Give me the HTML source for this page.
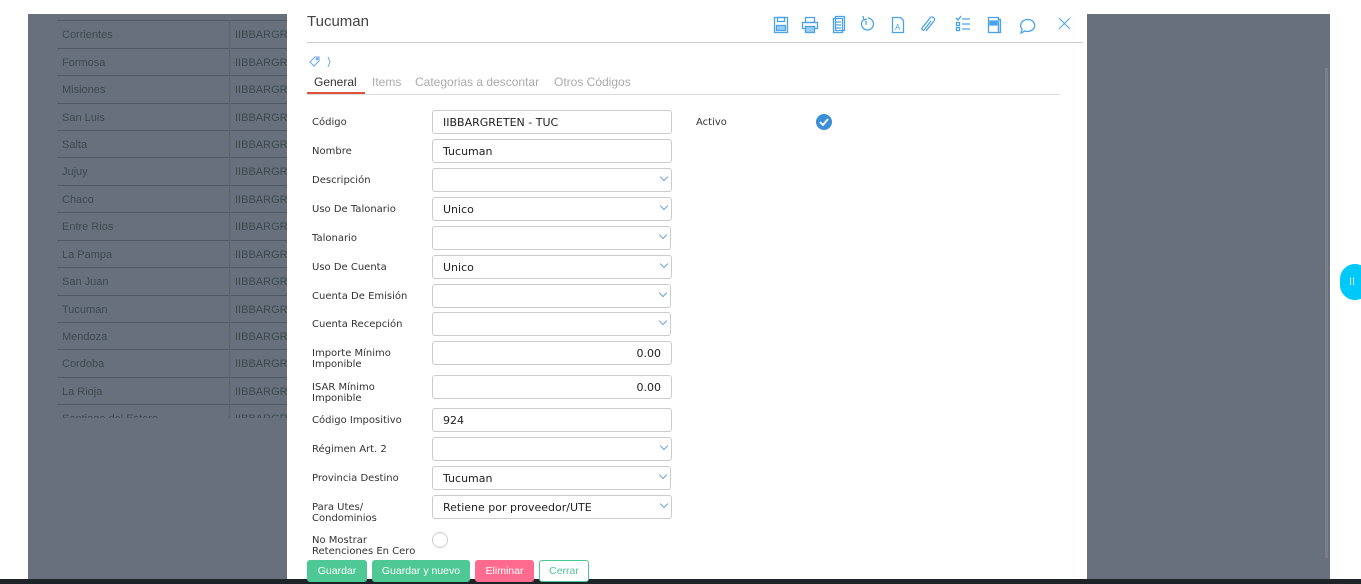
<!DOCTYPE html>
<html><head><meta charset="utf-8"><style>
*{box-sizing:border-box;margin:0;padding:0}
body{width:1361px;height:584px;position:relative;overflow:hidden;background:#fff;font-family:"Liberation Sans",sans-serif}
#ov{position:absolute;left:28px;top:14px;width:1302px;height:565px;background:#68707e}
#bot{position:absolute;left:0;top:579px;width:1361px;height:5px;background:#1e2328}
.tr{position:absolute;left:57px;width:230px;height:27px;border-top:1px solid #4f5866;font-size:11px;color:#3c4a4a}
.tr span{position:absolute;top:8px}
.scroll{position:absolute;left:1325px;top:68px;width:3px;height:490px;background:#7a7f88}
#modal{position:absolute;left:287px;top:0;width:800px;height:579px;background:#fff}
.lab{position:absolute;left:312px;font-family:"DejaVu Sans",sans-serif;font-size:10px;color:#333;line-height:11px;margin-top:1px}
.box{position:absolute;left:432px;width:240px;height:24px;border:1px solid #ccc;border-radius:3px;font-family:"DejaVu Sans",sans-serif;font-size:11px;color:#222;padding:6px 10px 0;line-height:12px}
.chev{position:absolute;right:4px;top:5px;width:6px;height:6px;border-right:1px solid #6aa6d8;border-bottom:1px solid #6aa6d8;transform:rotate(45deg)}
.btn{position:absolute;top:560px;height:22px;border-radius:3px;font-size:10.5px;color:#fff;text-align:center;line-height:22px}
</style></head><body>
<div id="ov"></div>
<div class="tr" style="top:20px"><span style="left:5px">Corrientes</span><span style="left:178px">IIBBARGRE</span></div>
<div class="tr" style="top:48px"><span style="left:5px">Formosa</span><span style="left:178px">IIBBARGRE</span></div>
<div class="tr" style="top:75px"><span style="left:5px">Misiones</span><span style="left:178px">IIBBARGRE</span></div>
<div class="tr" style="top:103px"><span style="left:5px">San Luis</span><span style="left:178px">IIBBARGRE</span></div>
<div class="tr" style="top:130px"><span style="left:5px">Salta</span><span style="left:178px">IIBBARGRE</span></div>
<div class="tr" style="top:157px"><span style="left:5px">Jujuy</span><span style="left:178px">IIBBARGRE</span></div>
<div class="tr" style="top:185px"><span style="left:5px">Chaco</span><span style="left:178px">IIBBARGRE</span></div>
<div class="tr" style="top:212px"><span style="left:5px">Entre Rios</span><span style="left:178px">IIBBARGRE</span></div>
<div class="tr" style="top:240px"><span style="left:5px">La Pampa</span><span style="left:178px">IIBBARGRE</span></div>
<div class="tr" style="top:267px"><span style="left:5px">San Juan</span><span style="left:178px">IIBBARGRE</span></div>
<div class="tr" style="top:295px"><span style="left:5px">Tucuman</span><span style="left:178px">IIBBARGRE</span></div>
<div class="tr" style="top:322px"><span style="left:5px">Mendoza</span><span style="left:178px">IIBBARGRE</span></div>
<div class="tr" style="top:349px"><span style="left:5px">Cordoba</span><span style="left:178px">IIBBARGRE</span></div>
<div class="tr" style="top:377px"><span style="left:5px">La Rioja</span><span style="left:178px">IIBBARGRE</span></div>
<div class="tr" style="top:404px;height:14px;overflow:hidden"><span style="left:5px">Santiago del Estero</span><span style="left:178px">IIBBARGRE</span></div>
<div style="position:absolute;left:229px;top:20px;width:1px;height:398px;background:#5c6472"></div>
<div class="scroll"></div>
<div id="bot"></div>
<div style="position:absolute;left:1340px;top:264px;width:30px;height:36px;border-radius:18px;background:#00c8f8;color:#cfefff;font-size:11px;line-height:36px;padding-left:9px">II</div>

<div id="modal"></div>
<div style="position:absolute;left:307px;top:13px;font-size:15px;color:#444">Tucuman</div>
<div style="position:absolute;left:307px;top:42px;width:776px;height:1px;background:#ccc"></div>
<svg style="position:absolute;left:760px;top:8px" width="320" height="32" fill="none" stroke="#4aa3ea" stroke-width="1.3">
<rect x="14.5" y="9.5" width="13" height="15"/><rect x="17.5" y="9.5" width="7" height="4"/><rect x="16.5" y="17.5" width="9" height="5" fill="#9ccdf4"/>
<rect x="45.5" y="9.5" width="9" height="5"/><rect x="42.5" y="14.5" width="15" height="6"/><rect x="45.5" y="18.5" width="9" height="6" fill="#9ccdf4"/>
<rect x="73.5" y="10.5" width="9" height="14"/><rect x="75.5" y="8.5" width="9" height="14"/><path d="M75 14h6M75 17h6M75 20h6"/>
<path d="M103 12a6 6 0 1 0 5 -2M103 8l1 4 3 -1M106 13v4"/>
<path d="M132.5 9.5h8l3 3v12h-11z"/><text x="135" y="22" font-size="8" fill="#4aa3ea" stroke="none" font-family="Liberation Sans">A</text>
<path d="M166 23l8 -10a2.5 2.5 0 0 0 -4 -3l-8 10a1.5 1.5 0 0 0 2 2l7 -9"/>
<path d="M196 10l2 2 3 -4M196.5 14.5h3v3h-3zM196.5 19.5h3v3h-3zM202 11h8M202 16h8M202 21h8"/>
<rect x="228.5" y="9.5" width="10" height="15"/><rect x="238.5" y="11.5" width="2" height="13"/><rect x="230" y="13" width="7" height="4" fill="#4aa3ea"/>
<path d="M261 25l1 -4a7 6 0 1 1 3 2z"/>
<path d="M299 10l11 11M310 10l-11 11" stroke-width="1"/>
</svg>
<svg style="position:absolute;left:308px;top:55px" width="26" height="14" fill="none" stroke="#6aa6e0" stroke-width="1"><path d="M2 7l5 -5h4v4l-5 5z"/><circle cx="9" cy="4" r="0.8"/><path d="M20 2l2 5 -2 5"/></svg>
<div style="position:absolute;top:75px;font-size:12px;color:#333;left:314px">General</div>
<div style="position:absolute;top:75px;font-size:12px;color:#aaa;left:372px">Items</div>
<div style="position:absolute;top:75px;font-size:12px;color:#aaa;left:415px">Categorias a descontar</div>
<div style="position:absolute;top:75px;font-size:12px;color:#aaa;left:554px">Otros Códigos</div>
<div style="position:absolute;left:307px;top:94px;width:753px;height:1px;background:#ddd"></div>
<div style="position:absolute;left:307px;top:92px;width:58px;height:2px;background:#e0523a"></div>

<div class="lab" style="top:116px">Código</div><div class="box" style="top:110px">IIBBARGRETEN - TUC</div>
<div class="lab" style="top:145px">Nombre</div><div class="box" style="top:139px">Tucuman</div>
<div class="lab" style="top:174px">Descripción</div><div class="box" style="top:168px"><i class="chev"></i></div>
<div class="lab" style="top:203px">Uso De Talonario</div><div class="box" style="top:197px">Unico<i class="chev"></i></div>
<div class="lab" style="top:232px">Talonario</div><div class="box" style="top:226px;width:239px"><i class="chev"></i></div>
<div class="lab" style="top:261px">Uso De Cuenta</div><div class="box" style="top:255px">Unico<i class="chev"></i></div>
<div class="lab" style="top:290px">Cuenta De Emisión</div><div class="box" style="top:284px;width:239px"><i class="chev"></i></div>
<div class="lab" style="top:318px">Cuenta Recepción</div><div class="box" style="top:312px;width:239px"><i class="chev"></i></div>
<div class="lab" style="top:347px">Importe Mínimo<br>Imponible</div><div class="box" style="top:341px;text-align:right">0.00</div>
<div class="lab" style="top:381px">ISAR Mínimo<br>Imponible</div><div class="box" style="top:375px;text-align:right">0.00</div>
<div class="lab" style="top:414px">Código Impositivo</div><div class="box" style="top:408px">924</div>
<div class="lab" style="top:443px">Régimen Art. 2</div><div class="box" style="top:437px"><i class="chev"></i></div>
<div class="lab" style="top:472px">Provincia Destino</div><div class="box" style="top:466px;width:239px">Tucuman<i class="chev"></i></div>
<div class="lab" style="top:501px">Para Utes/<br>Condominios</div><div class="box" style="top:495px">Retiene por proveedor/UTE<i class="chev"></i></div>
<div class="lab" style="top:534px">No Mostrar<br>Retenciones En Cero</div>
<div style="position:absolute;left:432px;top:532px;width:16px;height:16px;border:1px solid #ccc;border-radius:50%"></div>
<div class="lab" style="top:116px;left:696px">Activo</div>
<div style="position:absolute;left:816px;top:114px;width:16px;height:16px;border-radius:50%;background:#3a8fd6"><svg width="16" height="16"><path d="M4 8l3 3 5 -6" stroke="#fff" stroke-width="1.8" fill="none"/></svg></div>

<div class="btn" style="left:307px;width:60px;background:#4ec894">Guardar</div>
<div class="btn" style="left:372px;width:98px;background:#4ec894">Guardar y nuevo</div>
<div class="btn" style="left:475px;width:59px;background:#ff6b8e">Eliminar</div>
<div class="btn" style="left:539px;width:50px;background:#fff;border:1px solid #4ec894;color:#4ec894;line-height:20px">Cerrar</div>
</body></html>
